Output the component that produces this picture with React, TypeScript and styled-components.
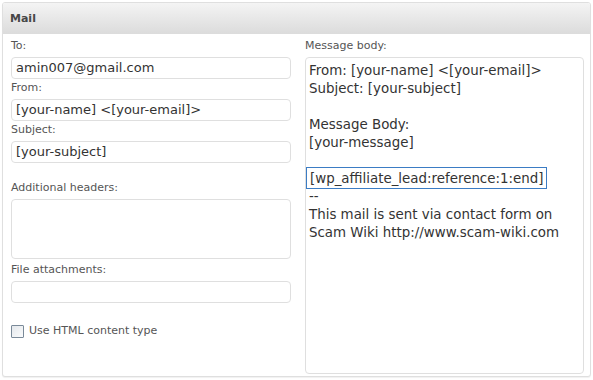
import React from "react";
import styled, { createGlobalStyle } from "styled-components";

const Global = createGlobalStyle`
  html, body { margin: 0; padding: 0; background: #fff; }
  body { font-family: "DejaVu Sans", Verdana, sans-serif; }
`;

const Page = styled.div`
  padding: 2px 0 0 2px;
  width: 593px;
  height: 380px;
  box-sizing: border-box;
`;

const Panel = styled.section`
  width: 589px;
  height: 375px;
  box-sizing: border-box;
  border: 1px solid #dfdfdf;
  border-radius: 3px;
  box-shadow: 0 1px 1px rgba(0, 0, 0, 0.06);
  background: #fff;
  overflow: hidden;
`;

const Header = styled.h3`
  margin: 0;
  height: 31px;
  box-sizing: border-box;
  border-bottom: 1px solid #dcdcdc;
  background: linear-gradient(to bottom, #f4f4f4, #dcdcdc);
  padding: 9px 0 0 7px;
  font-size: 11px;
  font-weight: bold;
  color: #464646;
  line-height: 13px;
`;

const Body = styled.div`
  display: grid;
  grid-template-columns: 281px 280px;
  column-gap: 13px;
  padding: 5px 0 0 7px;
`;

const Column = styled.div`
  display: flex;
  flex-direction: column;
`;

const Label = styled.label<{ $top?: number }>`
  display: block;
  margin-top: ${(p) => p.$top ?? 0}px;
  font-size: 11px;
  line-height: 14px;
  color: #555;
  padding-left: 1px;
  height: 14px;
`;

const Input = styled.div`
  margin: 4px 0 0 1px;
  height: 22px;
  box-sizing: border-box;
  border: 1px solid #dfdfdf;
  border-radius: 4px;
  padding: 2px 0 0 4px;
  font-size: 13px;
  line-height: 16px;
  color: #333;
  white-space: nowrap;
`;

const SmallArea = styled.div`
  margin: 4px 0 0 1px;
  height: 60px;
  box-sizing: border-box;
  border: 1px solid #dfdfdf;
  border-radius: 4px;
`;

const CheckRow = styled.label`
  display: flex;
  align-items: center;
  gap: 5px;
  margin: 21px 0 0 1px;
  font-size: 11px;
  color: #555;
  line-height: 14px;
`;

const Box = styled.span`
  width: 11px;
  height: 11px;
  border: 1px solid #7a8a99;
  border-radius: 1px;
  background: linear-gradient(135deg, #e4e8ec, #fafbfc);
`;

const BodyArea = styled.div`
  margin: 4px 0 0 1px;
  height: 317px;
  box-sizing: border-box;
  border: 1px solid #dfdfdf;
  border-radius: 4px;
  padding: 4px 4px 0 3px;
  font-size: 13.4px;
  line-height: 18px;
  color: #333;
`;

const Line = styled.div`
  min-height: 18px;
  white-space: nowrap;
`;

const Highlight = styled.span`
  margin: 0 -3px;
  padding: 3px 3px 2px 3px;
  border: 1px solid #3b7cc4;
`;

export default function App() {
  return (
    <Page>
      <Global />
      <Panel>
        <Header>Mail</Header>
        <Body>
          <Column>
            <Label>To:</Label>
            <Input>amin007@gmail.com</Input>
            <Label $top={2}>From:</Label>
            <Input>[your-name] &lt;[your-email]&gt;</Input>
            <Label $top={2}>Subject:</Label>
            <Input>[your-subject]</Input>
            <Label $top={18}>Additional headers:</Label>
            <SmallArea />
            <Label $top={4}>File attachments:</Label>
            <Input />
            <CheckRow>
              <Box />
              Use HTML content type
            </CheckRow>
          </Column>
          <Column>
            <Label>Message body:</Label>
            <BodyArea>
              <Line>From: [your-name] &lt;[your-email]&gt;</Line>
              <Line>Subject: [your-subject]</Line>
              <Line />
              <Line>Message Body:</Line>
              <Line>[your-message]</Line>
              <Line />
              <Line>
                <Highlight>[wp_affiliate_lead:reference:1:end]</Highlight>
              </Line>
              <Line>--</Line>
              <Line>This mail is sent via contact form on</Line>
              <Line>Scam Wiki http://www.scam-wiki.com</Line>
            </BodyArea>
          </Column>
        </Body>
      </Panel>
    </Page>
  );
}
